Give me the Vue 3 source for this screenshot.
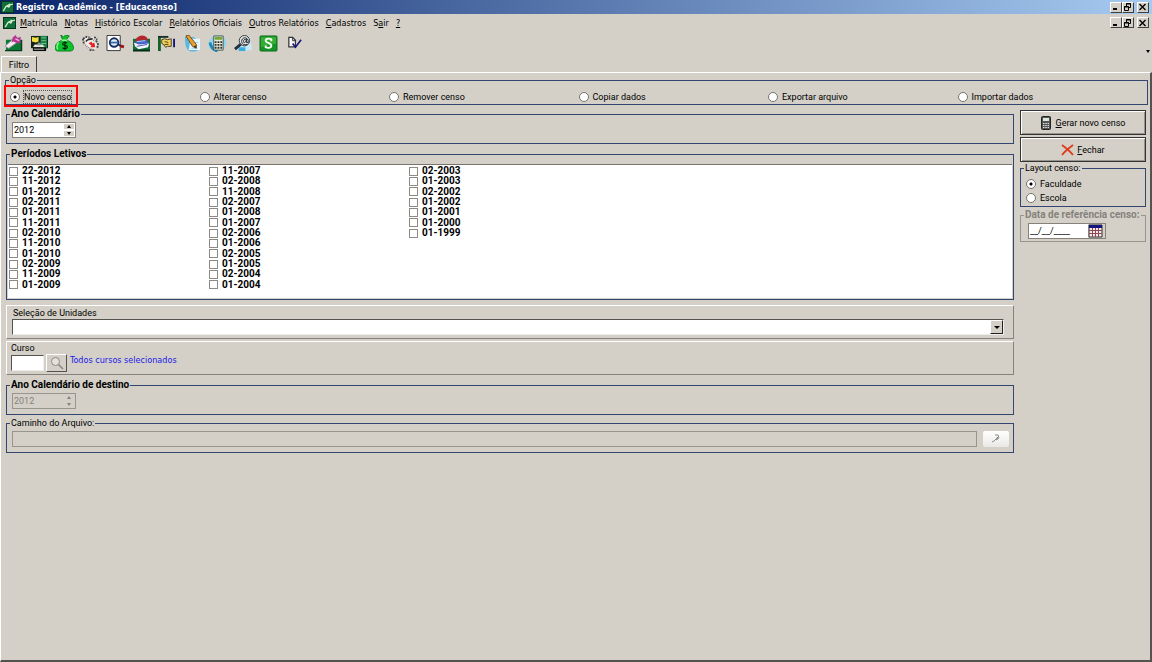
<script setup>
import { ref } from 'vue'

const menus = [
  ['', 'M', 'atrícula'],
  ['', 'N', 'otas'],
  ['', 'H', 'istórico Escolar'],
  ['', 'R', 'elatórios Oficiais'],
  ['', 'O', 'utros Relatórios'],
  ['', 'C', 'adastros'],
  ['S', 'a', 'ir'],
  ['', '?', ''],
]
const tools = ['Matrícula', 'Turmas', 'Financeiro', 'Sincronizar', 'Consulta', 'Biblioteca', 'Acesso', 'Editar', 'Calculadora', 'Pesquisa', 'Sistema', 'Documento']
const options = ['Novo censo', 'Alterar censo', 'Remover censo', 'Copiar dados', 'Exportar arquivo', 'Importar dados']
const option = ref('Novo censo')
const layout = ref('Faculdade')
const periods = [
  '22-2012', '11-2012', '01-2012', '02-2011', '01-2011', '11-2011', '02-2010', '11-2010', '01-2010', '02-2009', '11-2009', '01-2009',
  '11-2007', '02-2008', '11-2008', '02-2007', '01-2008', '01-2007', '02-2006', '01-2006', '02-2005', '01-2005', '02-2004', '01-2004',
  '02-2003', '01-2003', '02-2002', '01-2002', '01-2001', '01-2000', '01-1999',
]
const checked = ref([])
const year = ref('2012')
const course = ref('')
const date = ref('__/__/____')
</script>

<template>
  <div class="window">
    <header class="title">
      <svg class="logo" viewBox="0 0 13 12"><rect width="13" height="12" fill="#08351c" /><rect x="1" y="1" width="11" height="10" fill="#11713c" /><path d="M2 10 C4 9 4 5 6 5 S7 8 9 4 L12 3 M6 5 L9 3" stroke="#d8f0d0" stroke-width="1.300" fill="none" /></svg>
      <h1>Registro Acadêmico - [Educacenso]</h1>
      <div class="winbtns">
        <button aria-label="Minimizar"><svg viewBox="0 0 9 8"><path d="M2 6h4" stroke="#000" stroke-width="2" /></svg></button>
        <button aria-label="Restaurar"><svg viewBox="0 0 9 8"><path d="M3.500 3V.5h4v4H6M3 1h5M1.500 3.500h4v4h-4zM1 4h5" stroke="#000" fill="none" /></svg></button>
        <button class="close" aria-label="Fechar janela"><svg viewBox="0 0 9 8"><path d="M1.500 1l6 6M7.500 1l-6 6" stroke="#000" stroke-width="1.400" /></svg></button>
      </div>
    </header>

    <nav class="menu">
      <svg class="logo" viewBox="0 0 13 12"><rect width="13" height="12" fill="#08351c" /><rect x="1" y="1" width="11" height="10" fill="#11713c" /><path d="M2 10 C4 9 4 5 6 5 S7 8 9 4 L12 3 M6 5 L9 3" stroke="#d8f0d0" stroke-width="1.300" fill="none" /></svg>
      <a v-for="m in menus" :key="m.join('')" href="#">{{ m[0] }}<u>{{ m[1] }}</u>{{ m[2] }}</a>
      <div class="winbtns">
        <button aria-label="Minimizar documento"><svg viewBox="0 0 9 8"><path d="M2 6h4" stroke="#000" stroke-width="2" /></svg></button>
        <button aria-label="Restaurar documento"><svg viewBox="0 0 9 8"><path d="M3.500 3V.5h4v4H6M3 1h5M1.500 3.500h4v4h-4zM1 4h5" stroke="#000" fill="none" /></svg></button>
        <button class="close" aria-label="Fechar documento"><svg viewBox="0 0 9 8"><path d="M1.500 1l6 6M7.500 1l-6 6" stroke="#000" stroke-width="1.400" /></svg></button>
      </div>
    </nav>

    <div class="toolbar">
      <div class="tools">
        <button v-for="(t, i) in tools" :key="t" :aria-label="t">
          <svg v-if="i === 0" viewBox="0 0 20 18"><path d="M2 5h16v11H2z" fill="#0b7a35" /><path d="M1 16.500h18M18.500 5v12" stroke="#063d1c" stroke-width="1.500" /><path d="M1 12L10 4l5 3-10 7z" fill="#f5e9f2" stroke="#a99aa6" /><path d="M9 3l3-3 2 3 4-1-1 4 1 2-4 1-4-2-2 1z" fill="#b53591" /><path d="M12 4l4 2" stroke="#f3b4e0" stroke-width="1.500" /></svg>
          <svg v-else-if="i === 1" viewBox="0 0 20 18"><path d="M1 1h18v13H1z" fill="#17231c" /><path d="M11 1h7v13h-7z" fill="#138246" /><path d="M12 3h5M12 6h5M12 9h5" stroke="#79c68e" /><path d="M2 2l4 1 3-1v5l-3 1-4-1z" fill="#f1e13d" /><path d="M5 10h8l3 3H3z" fill="#e5e7df" /><path d="M3 13h14v4H3z" fill="#090909" /><path d="M4 15h11" stroke="#c8cbc4" /><path d="M8 8h3v3H8z" fill="#87978f" /></svg>
          <svg v-else-if="i === 2" viewBox="0 0 20 18"><path d="M6 0l3 2 2-2 4 1-3 4 5 3c4 5 3 9-1 9H3c-4 0-4-6 0-9l5-3z" fill="#0cc52a" stroke="#0a7c20" /><path d="M4 8c-3 3-2 6-1 7M7 5.500h6" stroke="#8ff597" fill="none" stroke-width="1.500" /><path d="M13 8.500c-2-1-5-1-5 1s5 1 5 3-3 3-5 1M10.500 7v9" fill="none" stroke="#05280b" stroke-width="1.300" /></svg>
          <svg v-else-if="i === 3" viewBox="0 0 20 18"><path d="M2 4l4-2 8 0 4 5 0 5-4 4-6-1-5-5z" fill="#efebe8" /><path d="M2 4l4-2 3 1M14 2l3 3M16 6l2 4-1 4M14 16l-5 0M2 4l1 5" fill="none" stroke="#444" stroke-width="2" stroke-dasharray="2 1" /><path d="M3 9l5 5 6 2M8 2l8 5" stroke="#8a8580" fill="none" stroke-dasharray="1 1" stroke-width="2" /><path d="M7 5l5-1M5 7l2-2" stroke="#222" stroke-width="1.500" /><path d="M8 9l3-2 1 2 2-1 1 5-5 0 1-2z" fill="#e32020" /></svg>
          <svg v-else-if="i === 4" viewBox="0 0 20 18"><path d="M1 .5h14v16H1z" fill="#fff" stroke="#333" /><circle cx="8.500" cy="8" r="4.500" fill="#e4f2fb" stroke="#172b60" stroke-width="2" /><path d="M5 8h7" stroke="#3b6fae" stroke-width="2" /><path d="M13 10l3 2" stroke="#172b60" stroke-width="2" /><path d="M15 11.500l4 1" stroke="#9a1515" stroke-width="3" /></svg>
          <svg v-else-if="i === 5" viewBox="0 0 20 18"><path d="M1 4h18v12H1z" fill="#116c35" /><path d="M1 16.500h18" stroke="#062c17" stroke-width="2" /><path d="M5 3q6-5 11 0l1 4H3z" fill="#b3272e" /><path d="M3 7l12-2 3 4-12 3z" fill="#4864c8" /><path d="M2 8l5 2 11-1-1 4-10 2-4-3z" fill="#f6f4ff" /><path d="M5 12l11-2" stroke="#4152ab" /><path d="M5 7l9-1" stroke="#9fd8ff" /></svg>
          <svg v-else-if="i === 6" viewBox="0 0 20 18"><path d="M1 2h3v15H1z" fill="#12632a" /><path d="M1 2h11" stroke="#1a3026" stroke-width="2" /><path d="M5 5l3-1 3 1 4-1v8l-4 0-2 1-2-3-2-1z" fill="#f0d35a" stroke="#4b3b12" /><path d="M8 7l4 1M8 10l4 0" stroke="#4b3b12" /><path d="M17 4h2v9h-2z" fill="#14167a" /></svg>
          <svg v-else-if="i === 7" viewBox="0 0 20 18"><path d="M2 2h9l7 5v7c-3 4-8 4-11 3-4-2-5-7-5-15z" fill="#5ab9e4" /><path d="M8 4h10v12H6z" fill="#e5f7fd" /><path d="M10 8h6M10 11h5M9 14h6" stroke="#9dcbe0" /><path d="M3 1l3-1 8 10 0 4-4-2z" fill="#eba22c" stroke="#6b4514" /><path d="M11 12l3-1 0 3z" fill="#333" /></svg>
          <svg v-else-if="i === 8" viewBox="0 0 20 18"><path d="M10 0c7 0 10 5 9 10s-7 8-12 7-7-5-6-9 4-8 9-8z" fill="#8bd6f0" /><path d="M2 8c1 5 4 8 8 9" stroke="#178ac2" stroke-width="3" fill="none" /><path d="M6 1h10v15H6z" fill="#e7ead7" stroke="#4e5651" /><path d="M7 2h8v3H7z" fill="#79a637" /><path d="M7 7.500h8M7 10.500h8M7 13.500h8" stroke="#333" stroke-width="2" stroke-dasharray="2 1" /></svg>
          <svg v-else-if="i === 9" viewBox="0 0 20 18"><path d="M5 6l5-4h7l2 14-13 1z" fill="#c6eaf4" /><path d="M5 13h7v4H5z" fill="#38aede" /><path d="M8 9L1 15" stroke="#202e38" stroke-width="3" /><circle cx="11" cy="6" r="5.500" fill="#e4e4e4" stroke="#303438" /><path d="M13 4v4h2c1-6-7-7-7-1 0 3 3 4 6 3M13 6c-1-3-3-1-3 1s2 1 3-1" stroke="#202428" fill="none" /></svg>
          <svg v-else-if="i === 10" viewBox="0 0 20 18"><rect x="1" y="1" width="18" height="16" rx="1" fill="#159326" stroke="#08701a" /><path d="M2 2h16v7L2 13z" fill="#36ad35" /><path d="M13 6.500V4.500c-2-1-6-1-6 1.500s6 2 6 5-4 3-6 2V11" fill="none" stroke="#f4fff0" stroke-width="2" /></svg>
          <svg v-else viewBox="0 0 20 18"><path d="M4 2.500h4l3 3v7H4z" fill="#f7f7f7" stroke="#33333a" stroke-width="1.300" /><path d="M8 2v4h3" fill="none" stroke="#33333a" /><path d="M8 9l3 4 6-8" fill="none" stroke="#15157f" stroke-width="1.700" /></svg>
        </button>
      </div>
      <span class="more"></span>
    </div>

    <div class="tabs"><button>Filtro</button></div>

    <main class="page">
      <fieldset class="box opcao">
        <legend>Opção</legend>
        <div class="options">
          <label v-for="o in options" :key="o" :class="{ current: o === option }">
            <input v-model="option" type="radio" name="opcao" :value="o" /><span>{{ o }}</span>
          </label>
        </div>
      </fieldset>

      <div class="columns">
        <div class="left">
          <fieldset class="box wide ano">
            <legend>Ano Calendário</legend>
            <div class="spin">
              <input v-model="year" type="text" aria-label="Ano Calendário" />
              <span class="arrows"><button class="up" aria-label="Aumentar"></button><button class="down" aria-label="Diminuir"></button></span>
            </div>
          </fieldset>

          <fieldset class="box wide periodos">
            <legend>Períodos Letivos</legend>
            <div class="list">
              <label v-for="p in periods" :key="p"><input v-model="checked" type="checkbox" :value="p" />{{ p }}</label>
            </div>
          </fieldset>

          <div class="panel unidades">
            <label for="unidades">Seleção de Unidades</label>
            <div class="combo">
              <select id="unidades"><option></option></select>
              <span class="drop"></span>
            </div>
          </div>

          <div class="panel curso">
            <label for="curso">Curso</label>
            <div class="line">
              <input id="curso" v-model="course" type="text" />
              <button class="search" aria-label="Pesquisar curso"><svg viewBox="0 0 14 14"><circle cx="5.500" cy="5.500" r="4" fill="#e4e2dc" stroke="#8d8a84" /><path d="M8.500 8.500l4.500 4.500" stroke="#8d8a84" stroke-width="1.700" /></svg></button>
              <span class="all">Todos cursos selecionados</span>
            </div>
          </div>

          <fieldset class="box wide destino" disabled>
            <legend>Ano Calendário de destino</legend>
            <div class="spin off">
              <input type="text" value="2012" aria-label="Ano Calendário de destino" />
              <span class="arrows"><button class="up" aria-label="Aumentar"></button><button class="down" aria-label="Diminuir"></button></span>
            </div>
          </fieldset>

          <fieldset class="box caminho" disabled>
            <legend>Caminho do Arquivo:</legend>
            <div class="path">
              <input type="text" aria-label="Caminho do Arquivo" />
              <button aria-label="Procurar arquivo"><svg viewBox="0 0 10 10"><path d="M4 1h3l1 3-3 2M7 3L3 7l-2 1M5 4l2 1" stroke="#8a8a8a" fill="none" /></svg></button>
            </div>
          </fieldset>
        </div>

        <aside class="right">
          <button class="action"><svg class="calc" viewBox="0 0 10 14"><rect x=".5" y=".5" width="9" height="13" rx="1" fill="#555" stroke="#222" /><path d="M2 2h6v3H2z" fill="#d9e8da" /><path d="M2 7.500h6M2 9.500h6M2 11.500h6" stroke="#ddd" stroke-dasharray="1.500 .8" /></svg><span><u>G</u>erar novo censo</span></button>
          <button class="action"><svg class="cross" viewBox="0 0 13 12"><path d="M1 1c4 3 8 6 11 10M12 1C8 4 4 7 1 11" stroke="#e03a1c" stroke-width="1.800" fill="none" /></svg><span><u>F</u>echar</span></button>
          <fieldset class="box layout">
            <legend>Layout censo:</legend>
            <label><input v-model="layout" type="radio" name="layout" value="Faculdade" /><span>Faculdade</span></label>
            <label><input v-model="layout" type="radio" name="layout" value="Escola" /><span>Escola</span></label>
          </fieldset>
          <fieldset class="box wide data">
            <legend>Data de referência censo:</legend>
            <div class="date">
              <input v-model="date" type="text" aria-label="Data de referência censo" />
              <button aria-label="Abrir calendário"><svg viewBox="0 0 16 14"><path d="M1 1h13v12H1z" fill="#f4e8e8" stroke="#333" /><path d="M1 1h13v3H1z" fill="#15157f" /><path d="M1 6.500h13M1 9.500h13M4.500 4v9M7.500 4v9M10.500 4v9" stroke="#8d4a55" /></svg></button>
            </div>
          </fieldset>
        </aside>
      </div>
    </main>
  </div>
</template>

<style>
html, body, #app { height: 100%; margin: 0; }
</style>

<style scoped>
.window { display: flex; flex-direction: column; min-height: 100vh; background: #d4d0c8; color: #000; font: 9px/12px Roboto, "Liberation Sans", sans-serif; }
.window, .window *, .window *::after { box-sizing: border-box; }
button, input, select { font: inherit; color: inherit; margin: 0; padding: 0; border: 0; border-radius: 0; background: none; min-width: 0; }
svg { display: block; }
.title { display: flex; align-items: center; height: 14px; padding: 0 3px 0 1px; background: linear-gradient(90deg, #0a246a, #a6caf0); color: #fff; font-family: "DejaVu Sans Condensed", "DejaVu Sans", sans-serif; }
.title h1 { margin: 0 0 0 2px; font-size: 9px; line-height: 14px; font-weight: bold; }
.logo { width: 13px; height: 12px; }
.winbtns { display: flex; margin-left: auto; }
.winbtns button { width: 12px; height: 11px; background: #d4d0c8; border: 1px solid; border-color: #fff #404040 #404040 #fff; }
.winbtns svg { width: 9px; height: 8px; }
.winbtns .close { margin-left: 3px; }
.menu { display: flex; align-items: center; height: 17px; padding: 0 3px; font-family: "DejaVu Sans Condensed", "DejaVu Sans", sans-serif; }
.menu a { margin-left: 7px; color: #000; text-decoration: none; white-space: nowrap; }
.menu .logo + a { margin-left: 4px; }
.toolbar { display: flex; align-items: center; height: 25px; padding: 0 2px 0 1px; }
.tools { display: flex; width: 306px; }
.tools button { flex: 1; display: flex; justify-content: center; }
.tools svg { width: 19px; height: 17px; }
.more { margin: 15px 0 0 auto; border: 2px solid transparent; border-top: 3px solid #000; border-bottom: 0; }
.tabs { height: 16px; padding-left: 1px; }
.tabs button { height: 16px; width: 36px; border-top: 1px solid #fff; border-left: 1px solid #fff; border-right: 1px solid #404040; }
.page { flex: 1; padding: 1px 2px 0 4px; border: 1px solid #fff; border-right: 2px solid #55534f; border-bottom: 2px solid #55534f; }
.box { min-width: 0; margin: 0; border: 1px solid #33466f; padding: 0; }
.box legend { height: 12px; margin-left: 3px; padding: 0 1px; line-height: 12px; white-space: nowrap; }
.wide legend { font-size: 10px; font-weight: bold; }
.opcao { height: 31px; }
.options { display: grid; grid-template-columns: repeat(6, 1fr); padding: 5px 0 0 4px; }
.options label { position: relative; display: flex; align-items: center; height: 12px; gap: 4px; }
.options .current span { outline: 1px dotted #555; }
.options .current::after { content: ""; position: absolute; left: -6px; top: -6px; width: 74px; height: 22px; border: 2px solid #f00; }
input[type="radio"] { appearance: none; width: 10px; height: 10px; border: 1px solid #77746e; border-radius: 50%; background: #fff; }
input[type="radio"]:checked { background: radial-gradient(circle, #000 0 1px, #fff 2px); }
.columns { display: grid; grid-template-columns: 1fr 126px; gap: 6px; padding: 0 2px 0 1px; }
.left { display: flex; flex-direction: column; min-width: 0; }
.ano, .destino { height: 36px; margin-top: 3px; }
.spin { display: flex; width: 64px; height: 16px; margin: 2px 0 0 5px; border: 1px solid #85827b; background: #fff; }
.spin input { flex: 1; padding-left: 1px; }
.arrows { display: flex; flex-direction: column; width: 12px; }
.arrows button { flex: 1; display: flex; align-items: center; justify-content: center; background: #d4d0c8; border: 1px solid #fff; }
.arrows button::after { content: ""; border: 2px solid transparent; }
.arrows .up::after { border-top: 0; border-bottom: 3px solid #000; }
.arrows .down::after { border-bottom: 0; border-top: 3px solid #000; }
.off { background: #d4d0c8; color: #85827b; border-color: #98958e; }
.off .arrows button { border-color: #d4d0c8; }
.off .arrows .up::after { border-bottom-color: #85827b; }
.off .arrows .down::after { border-top-color: #85827b; }
.periodos { height: 152px; margin-top: 4px; }
.list { display: grid; grid-auto-flow: column; grid-template-rows: repeat(12, 1fr); grid-auto-columns: 200px; height: 134px; margin: 4px 1px 0 1px; padding: 1px 0 8px 1px; border-top: 1px solid #77746e; background: #fff; font-size: 10px; font-weight: bold; line-height: 10px; }
.list label { display: flex; align-items: center; gap: 4px; }
input[type="checkbox"] { appearance: none; width: 9px; height: 9px; border: 1px solid #8d8a84; background: #fff; }
input[type="checkbox"]:checked { background: #33466f; }
.panel { border: 1px solid; border-color: #fff #85827b #85827b #fff; }
.panel label { display: block; }
.unidades { height: 34px; margin-top: 5px; padding: 1px 9px 0 5px; }
.unidades label { padding-left: 1px; }
.combo { display: flex; height: 16px; border: 1px solid; border-color: #55534f #eee #eee #55534f; background: #fff; }
.combo select { flex: 1; appearance: none; }
.drop { display: flex; align-items: center; justify-content: center; width: 13px; background: #d4d0c8; border: 1px solid; border-color: #fff #222 #222 #fff; }
.drop::after { content: ""; border: 3px solid transparent; border-top-color: #000; border-bottom: 0; }
.curso { height: 34px; margin-top: 2px; padding: 0 4px; }
.line { display: flex; }
.line input { width: 33px; height: 16px; margin-top: 1px; border: 1px solid; border-color: #55534f #eee #eee #55534f; background: #fff; }
.search { display: flex; align-items: center; justify-content: center; width: 21px; height: 18px; margin-left: 2px; border: 1px solid; border-color: #fff #55534f #55534f #fff; }
.search svg { width: 14px; height: 14px; }
.all { margin-left: 3px; color: #1a1ae6; font-family: "DejaVu Sans Condensed", "DejaVu Sans", sans-serif; }
.destino { margin-top: 4px; }
.caminho { height: 36px; margin-top: 2px; }
.path { display: flex; gap: 6px; padding: 2px 4px 0 5px; }
.path input { flex: 1; height: 16px; border: 1px solid #98958e; }
.path button { display: flex; align-items: center; justify-content: center; width: 26px; height: 16px; border-radius: 2px; background: linear-gradient(#fff, #e9e8e5); }
.path svg { width: 10px; height: 10px; }
.right { padding-top: 5px; }
.action { display: flex; align-items: center; justify-content: center; width: 100%; height: 25px; margin-bottom: 2px; border: 1px solid #333; box-shadow: inset 1px 1px #fff, inset -1px -1px #98958e; }
.calc { width: 10px; height: 14px; margin-right: 5px; }
.cross { width: 13px; height: 12px; margin-right: 3px; }
.layout { height: 45px; }
.action + .layout { margin-top: -2px; }
.layout label { display: flex; align-items: center; gap: 4px; height: 14px; padding-left: 5px; }
.layout legend + label { margin-top: 3px; }
.data { height: 33px; margin-top: 2px; border-color: #98958e; color: #85827b; }
.date { display: flex; width: 78px; height: 16px; margin: 2px 0 0 7px; border: 1px solid #85827b; background: #fff; color: #000; }
.date input { flex: 1; padding-left: 1px; }
.date button { width: 17px; background: #d4d0c8; }
.date svg { width: 16px; height: 14px; }
</style>
